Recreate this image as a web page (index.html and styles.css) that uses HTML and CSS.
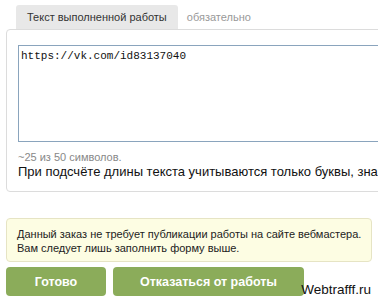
FILE: index.html
```html
<!DOCTYPE html>
<html lang="ru">
<head>
  <meta charset="UTF-8">
  <meta name="viewport" content="width=device-width, initial-scale=1.0">
  <title>Сдача работы</title>
  <link rel="stylesheet" href="styles.css">
</head>
<body>
  <main class="page">
    <div class="tabs">
      <span class="tab tab-active">Текст выполненной работы</span>
      <span class="tab-note">обязательно</span>
    </div>
    <section class="panel">
      <textarea class="answer">https://vk.com/id83137040</textarea>
      <div class="counter">~25 из 50 символов.</div>
      <div class="hint">При подсчёте длины текста учитываются только буквы, знаки препинания и пробелы.</div>
    </section>
    <div class="notice">
      Данный заказ не требует публикации работы на сайте вебмастера.<br>
      Вам следует лишь заполнить форму выше.
    </div>
    <div class="actions">
      <button type="button" class="btn btn-done">Готово</button>
      <button type="button" class="btn btn-refuse">Отказаться от работы</button>
    </div>
  </main>
  <div class="watermark">Webtrafff.ru</div>
</body>
</html>
```

FILE: styles.css
```css
html, body {
  margin: 0;
  padding: 0;
  overflow: hidden;
  background: #fff;
}

body {
  font-family: "Liberation Sans", Arial, sans-serif;
  color: #222;
  width: 378px;
  height: 302px;
  position: relative;
}

.page {
  width: 560px;
  padding: 5px 0 0 6px;
}

.tabs {
  display: flex;
  align-items: center;
  padding-left: 10px;
  height: 24px;
}

.tab {
  display: block;
  height: 24px;
  line-height: 24px;
  padding: 0 11px;
  font-size: 11px;
  color: #333;
}

.tab-active {
  background: #e8e8e8;
  border-radius: 3px 3px 0 0;
}

.tab-note {
  margin-left: 9px;
  font-size: 11px;
  color: #999;
}

.panel {
  border: 1px solid #dcdcdc;
  border-radius: 4px;
  padding: 15px 11px 0;
  height: 146px;
}

.answer {
  display: block;
  box-sizing: border-box;
  width: 100%;
  height: 97px;
  margin: 0;
  padding: 4px 2px;
  border: 1px solid #8aa4bd;
  font-family: "Liberation Mono", "Courier New", monospace;
  font-size: 11px;
  color: #111;
  resize: none;
}

.counter {
  margin-top: 9px;
  font-size: 11px;
  color: #888;
}

.hint {
  margin-top: 1px;
  font-size: 13px;
  color: #111;
  white-space: nowrap;
}

.notice {
  box-sizing: border-box;
  width: 366px;
  height: 44px;
  margin-top: 26px;
  padding: 8px 10px;
  background: #fdfde3;
  border: 1px solid #e6e4c4;
  border-radius: 4px;
  font-size: 11px;
  line-height: 14px;
  color: #222;
  white-space: nowrap;
}

.actions {
  display: flex;
  gap: 7px;
  margin-top: 5px;
}

.btn {
  height: 29px;
  border: none;
  border-radius: 4px;
  background: #8bac5a;
  color: #fff;
  font-family: "Liberation Sans", Arial, sans-serif;
  font-size: 12.5px;
  font-weight: bold;
  cursor: pointer;
}

.btn-done {
  width: 100px;
}

.btn-refuse {
  width: 191px;
}

.watermark {
  position: absolute;
  right: 7px;
  bottom: 5px;
  font-family: "Liberation Sans", Arial, sans-serif;
  font-size: 13.5px;
  color: #111;
}
```
